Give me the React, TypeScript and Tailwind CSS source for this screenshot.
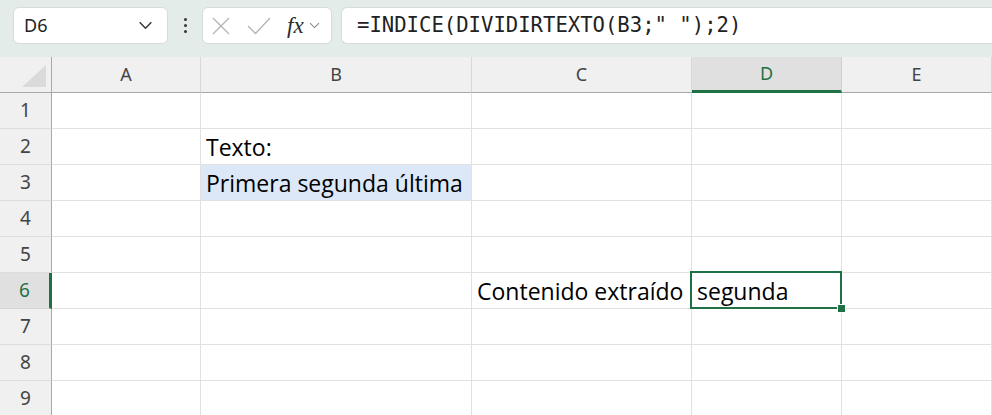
import type { ReactNode } from "react";

const COLS = ["A", "B", "C", "D", "E"];
const ROWS = [1, 2, 3, 4, 5, 6, 7, 8, 9];

// contents keyed by cell ref
const CELLS: Record<string, string> = {
  B2: "Texto:",
  B3: "Primera segunda última",
  C6: "Contenido extraído",
  D6: "segunda",
};

const ACTIVE_COL = "D";
const ACTIVE_ROW = 6;

const cellFont = { fontFamily: '"Open Sans", "Liberation Sans", sans-serif' };
const headFont = { fontFamily: '"Noto Sans", "Liberation Sans", sans-serif' };

const ChevronDown = ({ className }: { className?: string }) => (
  <svg viewBox="0 0 16 10" className={className} fill="none">
    <path d="M1.5 1.5 L8 8 L14.5 1.5" stroke="currentColor" strokeWidth="1.6" />
  </svg>
);

const NameBox = () => (
  <div className="flex h-[37px] w-[155px] items-center justify-between rounded-[6px] border border-[#d6dcd9] bg-white pl-[10px] pr-[14px]">
    <span className="text-[18px] text-[#222]" style={headFont}>
      D6
    </span>
    <ChevronDown className="h-[9px] w-[15px] text-[#333]" />
  </div>
);

const FxBox = () => (
  <div className="flex h-[37px] w-[130px] items-center rounded-[6px] border border-[#d6dcd9] bg-white pl-[9px]">
    <svg viewBox="0 0 18 18" className="h-[18px] w-[18px]" fill="none">
      <path d="M1 1 L17 17 M17 1 L1 17" stroke="#b4b4b4" strokeWidth="1.3" />
    </svg>
    <svg viewBox="0 0 24 18" className="ml-[17px] h-[18px] w-[24px]" fill="none">
      <path d="M1 9 L8.5 16.5 L23 1" stroke="#b4b4b4" strokeWidth="1.3" />
    </svg>
    <span
      className="ml-[16px] text-[23px] italic leading-none text-[#2b2b2b]"
      style={{ fontFamily: '"Liberation Serif", "DejaVu Serif", serif' }}
    >
      fx
    </span>
    <ChevronDown className="ml-[5px] h-[7px] w-[11px] text-[#8a8a8a]" />
  </div>
);

const Toolbar = () => (
  <div className="flex h-[57px] items-start bg-[#e3ece8] pl-[13px] pt-[7px]">
    <NameBox />
    <div className="flex h-[37px] w-[34px] flex-col items-center justify-center gap-[3px]">
      <span className="h-[3px] w-[3px] rounded-full bg-[#333]" />
      <span className="h-[3px] w-[3px] rounded-full bg-[#333]" />
      <span className="h-[3px] w-[3px] rounded-full bg-[#333]" />
    </div>
    <FxBox />
    <div className="ml-[9px] flex h-[37px] flex-1 items-center rounded-l-[6px] border border-r-0 border-[#d6dcd9] bg-white pl-[15px]">
      <span
        className="text-[20.6px] text-[#222]"
        style={{ fontFamily: '"DejaVu Sans Mono", "Liberation Mono", monospace' }}
      >
        =INDICE(DIVIDIRTEXTO(B3;" ");2)
      </span>
    </div>
  </div>
);

const HeaderCell = ({ children, active }: { children?: ReactNode; active?: boolean }) => (
  <div
    className={
      active
        ? "flex items-center justify-center border-b-[3px] border-r border-b-[#1e7145] border-r-[#cfcfcf] bg-[#e0e0e0] text-[18px] text-[#1e7145]"
        : "flex items-center justify-center border-b border-r border-b-[#a8a8a8] border-r-[#d8d8d8] bg-[#f0f0f0] text-[18px] text-[#444]"
    }
    style={headFont}
  >
    {children}
  </div>
);

const RowHead = ({ n }: { n: number }) => {
  const active = n === ACTIVE_ROW;
  return (
    <div
      className={
        active
          ? "flex items-center justify-center border-b border-r-[3px] border-b-[#d4d4d4] border-r-[#1e7145] bg-[#e0e0e0] text-[19px] text-[#1e7145]"
          : "flex items-center justify-center border-b border-r border-b-[#dcdcdc] border-r-[#a8a8a8] bg-[#f0f0f0] text-[19px] text-[#444]"
      }
      style={headFont}
    >
      {n}
    </div>
  );
};

const Cell = ({ col, row }: { col: string; row: number }) => {
  const ref = col + row;
  const text = CELLS[ref];
  const active = col === ACTIVE_COL && row === ACTIVE_ROW;
  const selected = ref === "B3";
  return (
    <div
      className={
        "relative flex items-end whitespace-nowrap border-b border-r border-[#e1e1e1] pb-[2px] pl-[5px] text-[23px] leading-[30px] text-black " +
        (selected ? "bg-[#dce8f7] " : "bg-white ") +
        (active ? "z-10" : "")
      }
      style={cellFont}
    >
      {text}
      {active && (
        <>
          <div className="absolute -left-[2px] -top-[2px] bottom-[-1px] right-[-1px] border-2 border-[#1e7145]" />
          <div className="absolute -bottom-[4px] -right-[4px] h-[7px] w-[7px] bg-[#1e7145] outline outline-1 outline-white" />
        </>
      )}
    </div>
  );
};

export default function App() {
  return (
    <div className="h-[415px] w-[992px] overflow-hidden bg-white">
      <Toolbar />
      <div className="grid grid-cols-[52px_149px_271px_220px_150px_150px] auto-rows-[36px]">
        <div className="relative border-b border-r border-b-[#a8a8a8] border-r-[#a8a8a8] bg-[#f0f0f0]">
          <svg viewBox="0 0 24 22" className="absolute left-[22px] top-[8px] h-[22px] w-[24px]">
            <path d="M24 0 L24 22 L0 22 Z" fill="#dadada" />
          </svg>
        </div>
        {COLS.map((c) => (
          <HeaderCell key={c} active={c === ACTIVE_COL}>
            {c}
          </HeaderCell>
        ))}
        {ROWS.map((r) => (
          <div key={r} className="contents">
            <RowHead n={r} />
            {COLS.map((c) => (
              <Cell key={c + r} col={c} row={r} />
            ))}
          </div>
        ))}
      </div>
    </div>
  );
}
